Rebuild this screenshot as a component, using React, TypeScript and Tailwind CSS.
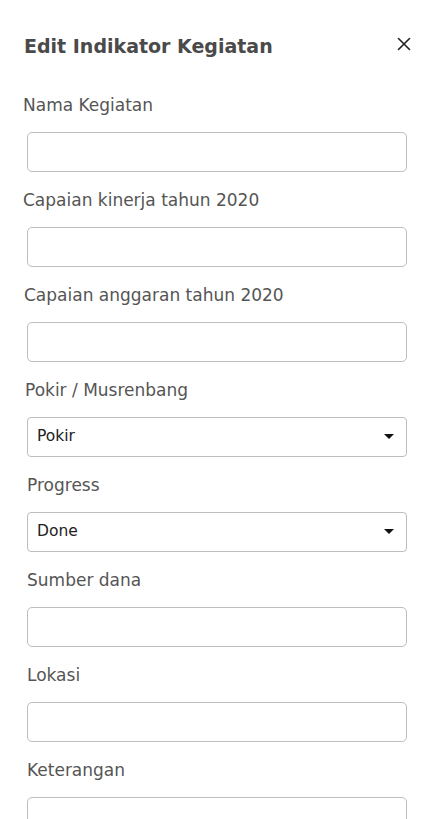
import React from "react";

const font = { fontFamily: '"DejaVu Sans", sans-serif' };

function Field({ label, pl, children }: { label: string; pl: string; children?: React.ReactNode }) {
  return (
    <div className="flex flex-col">
      <div className={`h-[24px] leading-[24px] text-[17px] text-[#555555] ${pl}`}>{label}</div>
      <div className="mt-[15px] pl-[27px] pr-[34px]">
        {children ?? <div className="h-[40px] rounded-[5px] border border-[#bdbdbd] bg-white" />}
      </div>
    </div>
  );
}

function Select({ value }: { value: string }) {
  return (
    <div className="h-[40px] rounded-[4px] border border-[#bdbdbd] bg-white flex items-center justify-between pl-[9px] pr-[12px]">
      <span className="text-[15.5px] text-[#222222]">{value}</span>
      <svg width="10" height="6" viewBox="0 0 10 6"><path d="M0 0H10L5 5Z" fill="#111" /></svg>
    </div>
  );
}

export default function App() {
  return (
    <div className="w-[441px] h-[819px] overflow-hidden bg-white" style={font}>
      <div className="flex items-center justify-between pl-[24px] pr-[30px] pt-[32px]">
        <h1 className="text-[19px] leading-[28px] font-semibold text-[#4a4a4a]">Edit Indikator Kegiatan</h1>
        <svg width="14" height="14" viewBox="0 0 14 14" className="mt-[-4px]">
          <path d="M1.5 1.5L12.5 12.5M12.5 1.5L1.5 12.5" stroke="#222" strokeWidth="1.6" strokeLinecap="round" />
        </svg>
      </div>
      <div className="mt-[33px] flex flex-col gap-[16px]">
        <Field label="Nama Kegiatan" pl="pl-[23px]" />
        <Field label="Capaian kinerja tahun 2020" pl="pl-[23px]" />
        <Field label="Capaian anggaran tahun 2020" pl="pl-[24px]" />
        <Field label="Pokir / Musrenbang" pl="pl-[25px]"><Select value="Pokir" /></Field>
        <Field label="Progress" pl="pl-[27px]"><Select value="Done" /></Field>
        <Field label="Sumber dana" pl="pl-[27px]" />
        <Field label="Lokasi" pl="pl-[27px]" />
        <Field label="Keterangan" pl="pl-[27px]" />
      </div>
    </div>
  );
}
